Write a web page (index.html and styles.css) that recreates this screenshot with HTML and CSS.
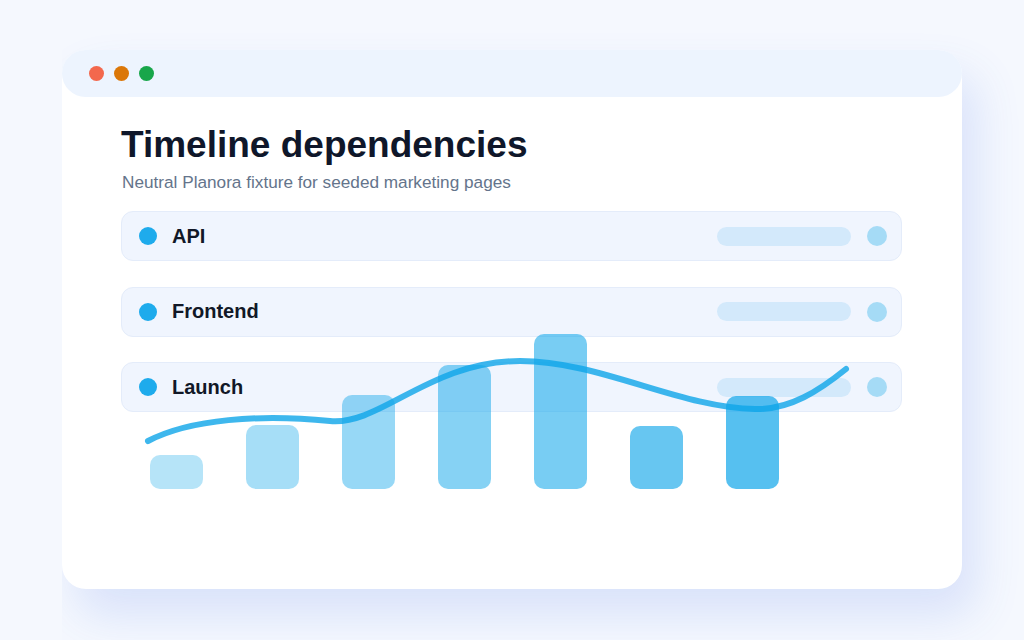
FILE: index.html
```html
<!DOCTYPE html>
<html>
<head>
    <title>Timeline dependencies</title>
    <link rel="stylesheet" href="styles.css">
</head>
<body>
    <div class="window">
        <div class="window-bar">
            <span class="dot dot-red"></span>
            <span class="dot dot-amber"></span>
            <span class="dot dot-green"></span>
        </div>
        <div class="content">
            <h1>Timeline dependencies</h1>
            <p class="subtitle">Neutral Planora fixture for seeded marketing pages</p>
            <div class="rows">
                <div class="row">
                    <span class="row-dot"></span>
                    <span class="row-label">API</span>
                    <span class="row-bar"></span>
                    <span class="row-end"></span>
                </div>
                <div class="row">
                    <span class="row-dot"></span>
                    <span class="row-label">Frontend</span>
                    <span class="row-bar"></span>
                    <span class="row-end"></span>
                </div>
                <div class="row">
                    <span class="row-dot"></span>
                    <span class="row-label">Launch</span>
                    <span class="row-bar"></span>
                    <span class="row-end"></span>
                </div>
            </div>
        </div>
        <!-- chart sits over the rows, drawn in page coordinates -->
        <svg class="chart" viewBox="62 50 900 539" width="900" height="539">
            <rect x="150" y="455" width="53" height="34" rx="10" fill="#0ea5e9" fill-opacity="0.3"/>
            <rect x="246" y="425" width="53" height="64" rx="10" fill="#0ea5e9" fill-opacity="0.37"/>
            <rect x="342" y="395" width="53" height="94" rx="10" fill="#0ea5e9" fill-opacity="0.43"/>
            <rect x="438" y="365" width="53" height="124" rx="10" fill="#0ea5e9" fill-opacity="0.5"/>
            <rect x="534" y="334" width="53" height="155" rx="10" fill="#0ea5e9" fill-opacity="0.56"/>
            <rect x="630" y="426" width="53" height="63" rx="10" fill="#0ea5e9" fill-opacity="0.63"/>
            <rect x="726" y="396" width="53" height="93" rx="10" fill="#0ea5e9" fill-opacity="0.7"/>
            <path d="M148 441 C190 419, 260 414, 330 421 C380 426, 430 361, 520 361 C600 361, 680 408, 755 409 C790 410, 820 390, 846 369"
                  fill="none" stroke="#0ea5e9" stroke-opacity="0.8" stroke-width="6" stroke-linecap="round"/>
        </svg>
    </div>
</body>
</html>
```

FILE: styles.css
```css
body {
    margin: 0;
    height: 640px;
    overflow: hidden;
    background-color: #f5f8fe;
    font-family: "Liberation Sans", Arial, sans-serif;
    padding: 50px 0 0 62px;
    box-sizing: border-box;
}
.window {
    position: relative;
    width: 900px;
    height: 539px;
    background: #fff;
    border-radius: 24px;
    box-shadow: 14px 26px 46px rgba(70, 110, 230, 0.16);
    clip-path: inset(-60px -140px -140px 0);
}
.window-bar {
    height: 47px;
    background: #edf4fe;
    border-radius: 24px;
    display: flex;
    align-items: center;
    gap: 10px;
    padding-left: 27px;
}
.dot {
    width: 15px;
    height: 15px;
    border-radius: 50%;
}
.dot-red { background: #f3684d; }
.dot-amber { background: #db7708; }
.dot-green { background: #18a64a; }
.content {
    padding: 27px 60px 0 59px;
}
h1 {
    margin: 0;
    font-size: 37px;
    line-height: 42px;
    color: #0f172a;
    font-weight: bold;
}
.subtitle {
    margin: 6px 0 0 1px;
    font-size: 17.2px;
    line-height: 20px;
    color: #64748b;
}
.rows {
    margin-top: 19px;
    display: flex;
    flex-direction: column;
    gap: 25.5px;
}
.row {
    height: 50px;
    box-sizing: border-box;
    background: #f0f5fe;
    border: 1px solid #e4ecfa;
    border-radius: 12px;
    display: flex;
    align-items: center;
    padding: 0 14px 0 17px;
}
.row-dot {
    width: 18px;
    height: 18px;
    border-radius: 50%;
    background: #1eabec;
}
.row-label {
    margin-left: 15px;
    font-size: 20px;
    font-weight: bold;
    color: #111827;
}
.row-bar {
    margin-left: auto;
    width: 134px;
    height: 19px;
    border-radius: 10px;
    background: #d3e9fb;
}
.row-end {
    margin-left: 16px;
    width: 20px;
    height: 20px;
    border-radius: 50%;
    background: #a5dbf6;
}
.chart {
    position: absolute;
    left: 0;
    top: 0;
}
```
